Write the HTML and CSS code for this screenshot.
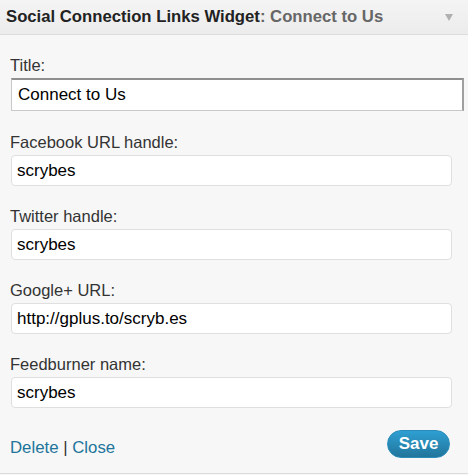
FILE: index.html
```html
<!DOCTYPE html>
<html>
<head>
<meta charset="utf-8">
<link rel="stylesheet" href="styles.css">
</head>
<body>
<div class="widget">
  <div class="widget-top">
    <h3 class="widget-title">Social Connection Links Widget<span class="in-title">: Connect to Us</span></h3>
    <span class="arrow"></span>
  </div>
  <div class="widget-inside">
    <div class="field">
      <label>Title:</label>
      <input class="title-input" type="text" value="Connect to Us">
    </div>
    <div class="field">
      <label>Facebook URL handle:</label>
      <input class="text-input" type="text" value="scrybes">
    </div>
    <div class="field">
      <label>Twitter handle:</label>
      <input class="text-input" type="text" value="scrybes">
    </div>
    <div class="field">
      <label>Google+ URL:</label>
      <input class="text-input" type="text" value="http://gplus.to/scryb.es">
    </div>
    <div class="field">
      <label>Feedburner name:</label>
      <input class="text-input" type="text" value="scrybes">
    </div>
    <div class="widget-control-actions">
      <div class="links"><a href="#">Delete</a> | <a href="#">Close</a></div>
      <button class="save">Save</button>
    </div>
  </div>
</div>
</body>
</html>
```

FILE: styles.css
```css
html, body {
  margin: 0;
  padding: 0;
  background: #f7f7f7;
}
body {
  font-family: "Liberation Sans", Arial, sans-serif;
  color: #333;
}
.widget {
  width: 468px;
  height: 473px;
  border-bottom: 1px solid #dcdcdc;
  background: #f7f7f7;
  box-sizing: content-box;
}
.widget-top {
  height: 35px;
  box-sizing: border-box;
  border-bottom: 1px solid #dcdcdc;
  background: linear-gradient(#f4f4f4, #ececec);
  display: flex;
  align-items: center;
  justify-content: space-between;
  padding: 0 15px 0 6px;
}
.widget-title {
  margin: 0;
  font-size: 16.7px;
  font-weight: bold;
  color: #222;
}
.in-title {
  color: #666;
}
.arrow {
  width: 0;
  height: 0;
  border-left: 4px solid transparent;
  border-right: 4px solid transparent;
  border-top: 7px solid #b0b0b0;
  margin-top: 1px;
}
.widget-inside {
  padding: 21px 4px 0 11px;
}
.field {
  display: flex;
  flex-direction: column;
  margin-bottom: 21px;
}
.field:first-child {
  margin-bottom: 22px;
}
.field label {
  font-size: 16.5px;
  color: #333;
  line-height: 18px;
  margin: 0 0 4px -1px;
}
input {
  font-family: "Liberation Sans", Arial, sans-serif;
  font-size: 17px;
  color: #000;
  outline: none;
  margin: 0;
}
.title-input {
  width: 453px;
  height: 33px;
  box-sizing: border-box;
  border: 1px solid #c8c8c8;
  border-top: 2px solid #8f8f8f;
  border-right: 2px solid #a0a0a0;
  background: #fff;
  padding: 0 6px;
}
.text-input {
  width: 441px;
  height: 31px;
  box-sizing: border-box;
  border: 1px solid #dfdfdf;
  border-radius: 4px;
  background: #fff;
  padding: 0 5px;
}
.widget-control-actions {
  display: flex;
  justify-content: space-between;
  align-items: center;
  padding: 0 14px 0 0;
  margin-top: 0;
}
.links {
  font-size: 16.8px;
  color: #333;
  margin-top: 9px;
  margin-left: -1px;
}
.links a {
  color: #21759b;
  text-decoration: none;
}
.save {
  font-family: "Liberation Sans", Arial, sans-serif;
  font-size: 17px;
  font-weight: bold;
  color: #fff;
  background: linear-gradient(#2e9fd2, #21759b);
  border: 1px solid #298cba;
  border-radius: 14px;
  width: 63px;
  height: 28px;
  padding: 0;
}
```
